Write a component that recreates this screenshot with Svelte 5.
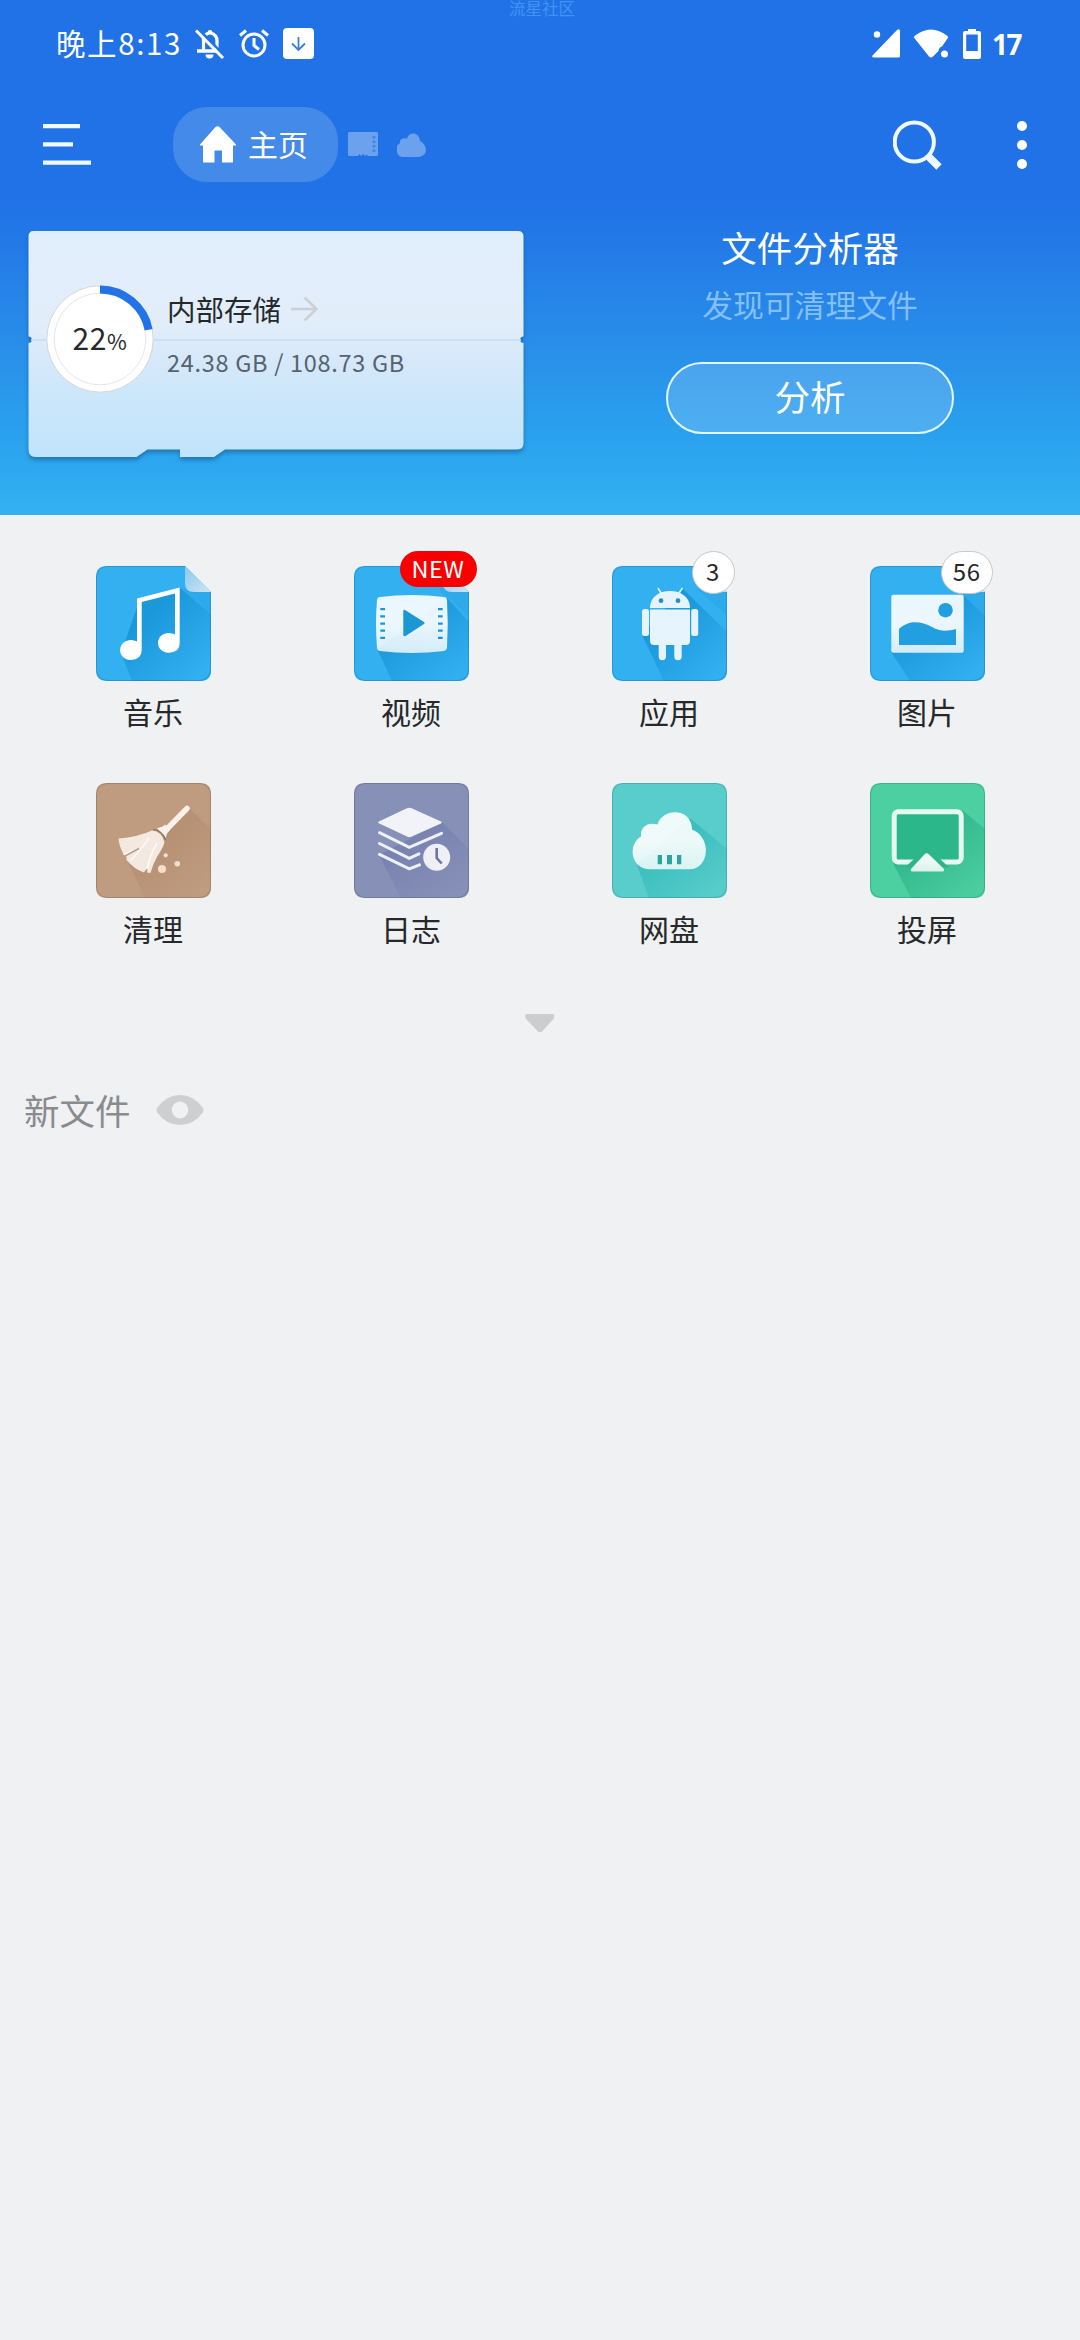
<script>
	const used = 24.38;
	const total = 108.73;
	const percent = Math.round((used / total) * 100);

	// ring in the storage card
	const radius = 49.5;
	const length = 2 * Math.PI * radius;

	const shortcuts = [
		{ icon: 'music', name: '音乐', color: 'blue', fold: true, shadow: 'M25 87L36 115H115V49L84 22L44 33Z' },
		{ icon: 'video', name: '视频', color: 'blue', fold: true, badge: 'NEW', hot: true, shadow: 'M23 83L38 115H115V56L93 32Z' },
		{ icon: 'apps', name: '应用', color: 'blue', fold: true, badge: '3', shadow: 'M30 69L52 115H115V66L71 23Z' },
		{ icon: 'photo', name: '图片', color: 'blue', fold: true, badge: '56', shadow: 'M21 86L40 115H115V50L93 29Z' },
		{ icon: 'clean', name: '清理', color: 'brown', shadow: 'M30 75L49 115H115V46L93 25Z' },
		{ icon: 'log', name: '日志', color: 'indigo', shadow: 'M25 72L47 115H115V66L88 39Z' },
		{ icon: 'cloud', name: '网盘', color: 'teal', shadow: 'M25 82L37 115H115V66L78 35Z' },
		{ icon: 'cast', name: '投屏', color: 'green', shadow: 'M23 80L41 115H115V46L92 27Z' }
	];

	const colors = {
		blue: ['#32b0f0', '#1b98da', '#31aff0'],
		brown: ['#bf9c80', '#b58f72', '#bf9b7f'],
		indigo: ['#8790b7', '#7983b0', '#8790b7'],
		teal: ['#59cdcc', '#3abdbd', '#57cccb'],
		green: ['#4ccfa1', '#2eb78b', '#4bcda0']
	};
</script>

<main>
	<header>
		<span class="watermark">流星社区</span>
		<div class="status">
			<span class="time">晚上8:13</span>
			<svg class="bell" width="30" height="30" viewBox="0 0 30 30">
				<path d="M8.500 8v13M10 6.500q1.500-2 4.500-2.500h1q6.500 1.500 6.500 8V20" fill="none" stroke="#fff" stroke-width="3.200" />
				<path d="M12.500 4q0-3 2.500-3t2.500 3zM2 20.300h20v3.400H2zM10.500 25.500h8a4 4 0 0 1-8 0z" fill="#fff" />
				<path d="M3.500 0L31 28" stroke="#2172e6" stroke-width="2.500" />
				<path d="M1 1.500L28 29" stroke="#fff" stroke-width="3" />
			</svg>
			<svg class="alarm" width="30" height="30" viewBox="0 0 30 30" fill="none" stroke="#fff" stroke-width="3">
				<circle cx="15" cy="16" r="11" />
				<path d="M1 6.500L7 1.500M29 6.500l-6-5M15 9v7.500l5 4" />
			</svg>
			<svg class="download" width="31" height="31" viewBox="0 0 31 31">
				<rect width="31" height="31" rx="4" fill="#fff" />
				<path d="M15.500 9v13M9 15.500l6.500 6.500 6.500-6.500" fill="none" stroke="#3b7edc" stroke-width="1.800" />
			</svg>
			<span class="spacer"></span>
			<svg width="28" height="29" viewBox="0 0 28 29" fill="#fff">
				<path d="M1 26L25 1q3-2 3 1V27q0 1.500-1.500 1.500H1.500Q-1 28 1 26z" />
				<circle cx="5" cy="5.500" r="3.200" />
			</svg>
			<svg class="wifi" width="34" height="29" viewBox="0 0 34 29" fill="#fff">
				<path d="M.5 7Q17-6 33.500 7q1 1 0 2.500L28 17.500q-3 .5-3.500 4.500L19 27.500q-2 2-4 0L.7 9.500Q-.5 8 .5 7z" />
				<circle cx="30.500" cy="25" r="3.500" />
			</svg>
			<svg class="battery" width="18" height="30" viewBox="0 0 18 30" fill="#fff">
				<path fill-rule="evenodd" d="M5 0h8v2h3q2 0 2 2v24q0 2-2 2H2q-2 0-2-2V4q0-2 2-2h3zM3.200 5.500V22h11.600V5.500z" />
			</svg>
			<span class="level">17</span>
		</div>

		<nav>
			<svg class="menu" width="48" height="41" viewBox="0 0 48 41" fill="#f0f9ff">
				<path d="M0 0h37v4.300H0zM0 18.300h30v4.300H0zM0 36.500h48v4.300H0z" />
			</svg>
			<div class="home">
				<svg width="36" height="37" viewBox="0 0 36 37" fill="#fff">
					<path d="M15.500 1Q17.500-.5 19.500 1L36 18.500v1h-3V36.500H22V24.500H14.500V36.500H3V19.500H0v-1z" />
				</svg>
				<span>主页</span>
			</div>
			<svg class="sd" width="30" height="25" viewBox="0 0 30 25">
				<path d="M1.500 0h27Q30 0 30 1.500v21Q30 24 28.500 24H20l-1.500-1.500L17 24l-2-2-2 2-1.500-2L10 24H1.500Q0 24 0 22.500v-21Q0 0 1.500 0z" fill="#6ca2ed" />
				<path d="M26 4v16" stroke="#3f86e9" stroke-width="3" stroke-dasharray="2.500 2" />
			</svg>
			<svg class="mini-cloud" width="29" height="24" viewBox="0 0 29 24" fill="#6ca2ed">
				<path d="M7 24a7 7.500 0 0 1-4-14C2 6 6 4.500 10 5.500 12-1.500 22-1.500 23 8c8 4 8 15-1 16z" />
			</svg>
			<span class="spacer"></span>
			<svg class="search" width="49" height="50" viewBox="0 0 49 50" fill="none" stroke="#f0f9ff">
				<circle cx="21.300" cy="22" r="19.600" stroke-width="4" />
				<path d="M34 35l3 3" stroke-width="5" />
				<path d="M36 37l10 10" stroke-width="7.500" />
			</svg>
			<svg width="10" height="50" viewBox="0 0 10 50" fill="#fff">
				<circle cx="5" cy="6" r="5" />
				<circle cx="5" cy="25" r="5" />
				<circle cx="5" cy="44" r="5" />
			</svg>
		</nav>

		<div class="panels">
			<section class="storage">
				<svg class="card" width="511" height="244" viewBox="0 0 511 244">
					<defs>
						<linearGradient id="card" x1="0" y1="0" x2="0" y2="1">
							<stop offset="0" stop-color="#e1eefb" />
							<stop offset=".4" stop-color="#e2edfa" />
							<stop offset=".6" stop-color="#d4e8fa" />
							<stop offset="1" stop-color="#bfe4fb" />
						</linearGradient>
					</defs>
					<path
						class="sheet"
						d="M13.500 8H498q5.500 0 5.500 5.500V113.500a3 3 0 0 0 0 6.500V220q0 6.500-6 6.500H205L194 234H160v-7.500H127.500L116.500 234H15.500q-7 0-7-8V120a3 3 0 0 0 0-6.500V13.500Q8.500 8 13.500 8z"
						fill="url(#card)"
					/>
					<path d="M11 117H501" stroke="#c9dcf0" stroke-width="1.500" />
				</svg>
				<div class="storage-content">
					<div class="ring">
						<svg width="108" height="108" viewBox="0 0 108 108">
							<circle cx="54" cy="54" r="53.200" fill="#fff" stroke="#d3d6d9" />
							<circle cx="54" cy="54" r="45.800" fill="#fff" stroke="#e4e6e8" />
							<circle
								cx="54"
								cy="54"
								r={radius}
								fill="none"
								stroke="#2273e7"
								stroke-width="8"
								stroke-dasharray="{(length * percent) / 100} {length}"
								transform="rotate(-90 54 54)"
							/>
						</svg>
						<p class="percent">{percent}<small>%</small></p>
					</div>
					<div class="info">
						<h2>
							内部存储
							<svg width="27" height="26" viewBox="0 0 27 26" fill="none" stroke="#cdd0d3" stroke-width="2.500">
								<path d="M0 13H25.500M13.500 1.500L25.500 13 13.500 24.500" />
							</svg>
						</h2>
						<p>{used} GB / {total} GB</p>
					</div>
				</div>
			</section>
			<section class="analyzer">
				<h2>文件分析器</h2>
				<p>发现可清理文件</p>
				<button>分析</button>
			</section>
		</div>
	</header>

	<div class="grid">
		{#each shortcuts as item}
			<div class="shortcut">
				<div class="tile">
					<svg width="115" height="115" viewBox="0 0 115 115">
						<defs>
							<linearGradient id="shade-{item.icon}" x1=".3" y1=".3" x2=".85" y2=".95">
								<stop offset="0" stop-color={colors[item.color][1]} />
								<stop offset="1" stop-color={colors[item.color][2]} />
							</linearGradient>
							<linearGradient id="paper-{item.icon}" x1="0" y1="0" x2="0" y2="1">
								<stop offset="0" stop-color="#fff" stop-opacity=".9" />
								<stop offset=".5" stop-color="#fff" stop-opacity=".91" />
								<stop offset="1" stop-color="#fff" stop-opacity=".8" />
							</linearGradient>
							<linearGradient id="fold-{item.icon}" x1="0" y1="0" x2="1" y2="1">
								<stop offset="0" stop-color="#8bc8ed" />
								<stop offset="1" stop-color="#cde5f5" />
							</linearGradient>
							<clipPath id="clip-{item.icon}">
								<path d={item.fold ? 'M11 0H89L115 26V104Q115 115 104 115H11Q0 115 0 104V11Q0 0 11 0z' : 'M11 0H104Q115 0 115 11V104Q115 115 104 115H11Q0 115 0 104V11Q0 0 11 0z'} />
							</clipPath>
						</defs>
						<g clip-path="url(#clip-{item.icon})">
							<rect width="115" height="115" fill={colors[item.color][0]} />
							<path d={item.shadow} fill="url(#shade-{item.icon})" />
							<rect x=".5" y=".5" width="114" height="114" rx="10.500" fill="none" stroke="#000" stroke-opacity=".15" />
						</g>
						{#if item.fold}
							<path d="M84 22L115 50V26H100z" fill="#1b98da" opacity=".25" />
							<path d="M89 0L115 26H98Q89 26 89 17z" fill="url(#fold-{item.icon})" />
						{/if}

						{#if item.icon === 'music'}
							<path fill="#fff" d="M41 32.500L83.700 21.500V77q0 9.500-11 9.700c-14-.5-14-18.500-1-19.700 3 0 5 .5 7.300 1.500V27.500L45.700 36V84q0 9.500-11 10c-14-.5-14-19-.5-20 2.500 0 4.500.5 6.800 1.500z" />
						{:else if item.icon === 'video'}
							<path fill="url(#paper-video)" d="M26 31Q57 27 90 31q2.500 0 3 3 1.500 24 0 48-.5 2.500-3 3Q57 89 26 85q-3-.5-3-3-2-24 0-48 .5-3 3-3z" />
							<path fill="#1b98d4" d="M49.300 44.500q1-1.500 2.500 0L70 56q1.500 1 0 2L51.500 70q-1.500 1-2.200-1zM26.300 42H31v2.300h-4.700zM26.300 49.200H31v2.300h-4.700zM26.300 56.400H31v2.300h-4.700zM26.300 63.500H31v2.300h-4.700zM26.300 70.700H31v2.300h-4.700zM84 42h4.700v2.300H84zM84 49.200h4.700v2.300H84zM84 56.400h4.700v2.300H84zM84 63.500h4.700v2.300H84zM84 70.700h4.700v2.300H84z" />
						{:else if item.icon === 'apps'}
							<g fill="#e6f4fd">
								<path d="M38 42C38 31 47 25 58 25s20 6 20 17z" />
								<path d="M38 43.500H78V75q0 4-4 4H69.700V90.500a3.600 3.600 0 0 1-7.400 0V79H54V90.500a3.600 3.600 0 0 1-7.300 0V79H42q-4 0-4-4z" />
								<rect x="30" y="43" width="7" height="27" rx="2.500" />
								<rect x="79.200" y="43" width="7" height="27" rx="2.500" />
							</g>
							<path d="M46.300 22.500L49.500 28M70 22.500L66.500 28" stroke="#e6f4fd" stroke-width="1.600" stroke-linecap="round" />
							<circle cx="49" cy="34.700" r="2.400" fill="#258fca" />
							<circle cx="66" cy="34.700" r="2.400" fill="#258fca" />
						{:else if item.icon === 'photo'}
							<rect x="21.300" y="28.700" width="72.400" height="58" rx="2" fill="url(#paper-photo)" />
							<circle cx="75.500" cy="44.200" r="7.300" fill="#219fe0" />
							<path fill="#219fe0" d="M29 63C40 53 52 56 61 60.500 70 65.500 77 65.500 86 63V79H29z" />
						{:else if item.icon === 'clean'}
							<path d="M91 25.500L70 47" stroke="#fcf1ea" stroke-width="5.500" stroke-linecap="round" />
							<path fill="#fcf1ea" d="M61 45q6-1 8-3.500L74 47q-4 3-4 8.500z" />
							<path fill="#f4e9e1" d="M22.500 55.500Q42 54 56 47.500q10 1 12.500 11.500-1 5-7 14-5 9-7 17l-3.500-.5.8-5-4 5Q38 86 30.500 77v-3L27.500 71Q23 63 22.500 55.500z" />
							<path d="M57 46.500q10 1 12.500 10.500" stroke="#7f7269" stroke-width="1.200" fill="none" />
							<path d="M27.500 71.500L42 66M53 55Q44 68 35 77M61 60Q54 72 51 86" stroke="#fff" stroke-width="1.300" fill="none" />
							<path d="M29 73L43 65.500" stroke="#bf9c80" stroke-width="1.500" />
							<circle cx="69.700" cy="72.300" r="2.100" fill="#f6ddcf" />
							<circle cx="81.300" cy="80.700" r="2.800" fill="#f6ddcf" />
							<circle cx="66" cy="86" r="4" fill="#f6ddcf" />
						{:else if item.icon === 'log'}
							<path fill="#f1f3f8" d="M53 25.300q2.300-1 4.600 0L87 38.500q1.600.9 0 1.900L57.600 53.500q-2.300 1-4.600 0L24.800 40.300q-1.500-1 0-1.900z" />
							<path d="M25.500 49.700l29.800 14.600 32.200-14M25.500 60.500l29.800 14.800 9.700-4.500M25.500 71.300l29.800 14.500 10.200-4" fill="none" stroke="#eff1f9" stroke-width="3" stroke-linecap="round" />
							<circle cx="82.700" cy="74.300" r="13.500" fill="#eff0f6" />
							<path d="M82.700 65v10l5 5.500" fill="none" stroke="#6d76a2" stroke-width="2.600" />
						{:else if item.icon === 'cloud'}
							<path fill="url(#paper-cloud)" d="M38 86.300C19 86.300 15 62 29 53.500 28 44 36 39 45.500 41.500 50 24.500 80 24 80 46.500 100 54 98 86.300 77 86.300z" />
							<path fill="#2fa3a3" d="M45.700 72H50v9.300h-4.300zM55 72h5v9.300h-5zM65 72h4.300v9.300H65z" />
						{:else}
							<rect x="24.200" y="28.800" width="67" height="50.200" rx="4" fill="#2cb78b" stroke="#e5f9f2" stroke-width="5" />
							<path d="M35 84.500L57 63.500l22 21z" fill="#2eb489" />
							<path d="M54.800 71q1.900-1.600 3.800 0L73.500 85.500q1.500 2.500-1 3h-30q-3-.5-1-3z" fill="url(#paper-cast)" />
						{/if}
					</svg>
					{#if item.badge}
						<span class="badge" class:hot={item.hot}>{item.badge}</span>
					{/if}
				</div>
				<span class="name">{item.name}</span>
			</div>
		{/each}
	</div>

	<svg class="expand" width="30" height="18" viewBox="0 0 30 18">
		<path d="M1 0H28.500Q30 2 28.500 5L17 17.500q-2 2-4 0L1 5Q-.5 2 1 0z" fill="#cccdcf" />
	</svg>

	<div class="new-files">
		<span>新文件</span>
		<svg width="48" height="30" viewBox="0 0 48 30">
			<path fill-rule="evenodd" fill="#cecfd1" d="M1 13Q10 0 24 0t23 13q1 2 0 4Q38 30 24 30T1 17q-1-2 0-4zM24 6.500a8.200 8.500 0 1 0 .01 0z" />
		</svg>
	</div>
</main>

<style>
	:global(body) {
		margin: 0;
		background: #eff1f3;
	}

	main {
		width: 1080px;
		min-height: 2340px;
		background: #eff1f3;
		font-family: 'Noto Sans CJK SC', sans-serif;
		font-weight: 400;
		color: #26282a;
	}

	h2,
	p {
		margin: 0;
		font-weight: inherit;
	}

	svg {
		display: block;
		flex: none;
	}

	header {
		position: relative;
		height: 515px;
		background: linear-gradient(#2172e6 0, #2172e6 205px, #298fea 350px, #2aa0ee 430px, #32b2f2 515px);
		color: #fff;
	}

	.watermark {
		position: absolute;
		top: -4px;
		left: 509px;
		font-size: 16.5px;
		line-height: 24px;
		color: #4293f4;
	}

	.spacer {
		flex: 1;
	}

	.status {
		display: flex;
		align-items: center;
		box-sizing: border-box;
		height: 87px;
		padding: 0 60px 0 56px;
	}

	.time {
		width: 139px;
		font-size: 29.5px;
		line-height: 40px;
		letter-spacing: 1.6px;
		margin-top: -3px;
		white-space: nowrap;
	}

	.alarm {
		margin-left: 14px;
	}

	.download {
		margin-left: 14px;
	}

	.wifi {
		margin-left: 14px;
	}

	.battery {
		margin-left: 15px;
	}

	.level {
		margin-left: 11px;
		width: 28px;
		font-family: 'Open Sans', sans-serif;
		font-size: 28px;
		font-weight: 700;
		letter-spacing: -1.5px;
	}

	nav {
		display: flex;
		align-items: center;
		box-sizing: border-box;
		height: 115px;
		padding: 0 53px 0 43px;
	}

	.home {
		display: flex;
		align-items: center;
		box-sizing: border-box;
		width: 165px;
		height: 75px;
		margin-left: 82px;
		padding-left: 27px;
		border-radius: 34px;
		background: #448ae9;
	}

	.home span {
		margin: -3px 0 0 12px;
		font-size: 30px;
		line-height: 40px;
	}

	.sd {
		margin-left: 10px;
	}

	.mini-cloud {
		margin-left: 19px;
	}

	.search {
		margin-right: 75px;
	}

	.panels {
		display: flex;
		justify-content: space-between;
	}

	.storage {
		display: grid;
		margin: 21px 0 0 20px;
	}

	.card,
	.storage-content {
		grid-area: 1 / 1;
	}

	.sheet {
		filter: drop-shadow(0 3px 2px rgba(20, 80, 130, 0.55));
	}

	.storage-content {
		display: flex;
		padding: 61.5px 0 0 26px;
		z-index: 1;
	}

	.ring {
		display: grid;
		place-items: center;
		width: 108px;
		height: 108px;
	}

	.ring > * {
		grid-area: 1 / 1;
	}

	.percent {
		font-size: 30px;
		line-height: 40px;
		letter-spacing: 0.6px;
		color: #26282a;
	}

	.percent small {
		font-size: 21.5px;
	}

	.info {
		padding: 5px 0 0 13px;
	}

	.info h2 {
		display: flex;
		align-items: center;
		gap: 10px;
		font-size: 28.5px;
		line-height: 38px;
		color: #26282a;
	}

	.info p {
		margin-top: 17px;
		font-size: 23.5px;
		line-height: 34px;
		letter-spacing: 0.7px;
		color: #56626d;
	}

	.analyzer {
		display: flex;
		flex-direction: column;
		align-items: center;
		width: 288px;
		margin-right: 126px;
		padding-top: 20px;
	}

	.analyzer h2 {
		font-size: 35.5px;
		line-height: 50px;
	}

	.analyzer p {
		margin-top: 11px;
		font-size: 30.8px;
		line-height: 42px;
		color: #84bff6;
	}

	.analyzer button {
		box-sizing: border-box;
		width: 288px;
		height: 72px;
		margin-top: 37px;
		padding: 0 0 4px;
		border: 2.5px solid #e0f7ff;
		border-radius: 36px;
		background: rgba(255, 255, 255, 0.16);
		font: inherit;
		font-size: 35.5px;
		line-height: 60px;
		color: #fff;
	}

	.grid {
		display: grid;
		grid-template-columns: repeat(4, 258px);
		grid-auto-rows: 217px;
		padding: 51px 24px 0;
	}

	.shortcut {
		display: flex;
		flex-direction: column;
		align-items: center;
	}

	.tile {
		position: relative;
		width: 115px;
		height: 115px;
	}

	.badge {
		position: absolute;
		top: -15px;
		right: -8px;
		box-sizing: border-box;
		min-width: 43px;
		height: 43px;
		padding: 0 11px;
		border: 1px solid #c6c8ca;
		border-radius: 22px;
		background: #fff;
		font-size: 24px;
		line-height: 38px;
		letter-spacing: 0.5px;
		text-align: center;
	}

	.badge.hot {
		height: 36px;
		padding: 0 12px;
		border: none;
		background: #f90000;
		color: #fff;
		font-size: 23.5px;
		line-height: 34px;
	}

	.name {
		margin-top: 9px;
		font-size: 30px;
		line-height: 42px;
	}

	.expand {
		margin: 14px 0 0 525px;
	}

	.new-files {
		display: flex;
		align-items: center;
		gap: 25px;
		height: 54px;
		margin-top: 51px;
		padding-left: 24px;
		font-size: 35.5px;
		line-height: 54px;
		color: #898b8d;
	}
</style>
